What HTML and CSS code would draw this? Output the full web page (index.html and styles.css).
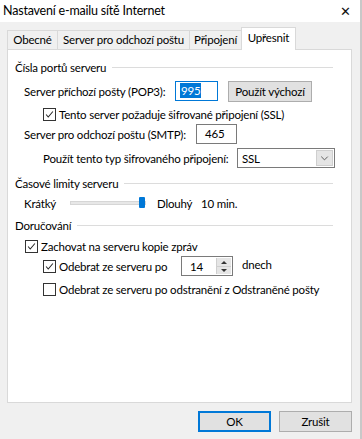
FILE: index.html
```html
<!DOCTYPE html>
<html lang="cs">
<head>
    <meta charset="UTF-8">
    <title>Nastavení e-mailu sítě Internet</title>
    <link rel="stylesheet" href="styles.css">
</head>
<body>
    <div class="window">
        <div class="titlebar">
            <span class="title">Nastavení e-mailu sítě Internet</span>
            <span class="close">&#x2715;</span>
        </div>

        <div class="tabs">
            <div class="tab t1">Obecné</div>
            <div class="tab t2">Server pro odchozí poštu</div>
            <div class="tab t3">Připojení</div>
            <div class="tab t4 active">Upřesnit</div>
        </div>

        <div class="panel">
            <div class="group-title first">Čísla portů serveru</div>

            <div class="row r-pop3">
                <span class="label w-pop3">Server příchozí pošty (POP3):</span>
                <div class="input focused w-43"><span class="sel">995</span></div>
                <button class="btn btn-default-port">Použít výchozí</button>
            </div>

            <div class="row r-check in-2 r-ssl">
                <span class="check on"><svg viewBox="0 0 13 13"><path d="M2.5 6.5 L5 9.5 L10.5 3"/></svg></span>
                <span>Tento server požaduje šifrované připojení (SSL)</span>
            </div>

            <div class="row r-smtp">
                <span class="label w-smtp">Server pro odchozí poštu (SMTP):</span>
                <div class="input w-41">465</div>
            </div>

            <div class="row r-enc in-2">
                <span class="label w-enc">Použít tento typ šifrovaného připojení:</span>
                <div class="select">
                    <span>SSL</span>
                    <span class="drop"><svg viewBox="0 0 16 15"><path d="M4.5 6 L8 9.5 L11.5 6"/></svg></span>
                </div>
            </div>

            <div class="group-title">Časové limity serveru</div>

            <div class="row r-slider">
                <span class="label w-short">Krátký</span>
                <div class="slider"><span class="thumb"></span></div>
                <span class="label w-long">Dlouhý</span>
                <span>10 min.</span>
            </div>

            <div class="group-title g-deliv">Doručování</div>

            <div class="row r-check r-keep">
                <span class="check on"><svg viewBox="0 0 13 13"><path d="M2.5 6.5 L5 9.5 L10.5 3"/></svg></span>
                <span>Zachovat na serveru kopie zpráv</span>
            </div>

            <div class="row r-remove in-2">
                <span class="check on"><svg viewBox="0 0 13 13"><path d="M2.5 6.5 L5 9.5 L10.5 3"/></svg></span>
                <span class="label w-remove">Odebrat ze serveru po</span>
                <div class="spin">
                    <span class="spin-val">14</span>
                    <span class="spin-btns">
                        <span class="arr up"></span>
                        <span class="arr down"></span>
                    </span>
                </div>
                <span class="days">dnech</span>
            </div>

            <div class="row r-check in-2 r-deleted">
                <span class="check"></span>
                <span>Odebrat ze serveru po odstranění z Odstraněné pošty</span>
            </div>
        </div>

        <div class="footer">
            <button class="btn btn-ok">OK</button>
            <button class="btn">Zrušit</button>
        </div>
    </div>
</body>
</html>
```

FILE: styles.css
```css
* { margin: 0; padding: 0; box-sizing: border-box; }
body {
    font-family: Lato, "Noto Sans", sans-serif;
    font-size: 11.5px;
    letter-spacing: -0.2px;
    color: #000;
    background: #f0f0f0;
}
.window {
    width: 362px;
    height: 439px;
    background: #f0f0f0;
    border-right: 2px solid #c8c8c8;
}

/* title bar */
.titlebar {
    height: 22px;
    background: #fff;
    display: flex;
    align-items: center;
    justify-content: space-between;
    padding: 0 9px 1px 3px;
}
.title { font-size: 12.5px; }
.close { font-size: 13px; color: #111; }

/* tabs */
.tabs {
    display: flex;
    align-items: flex-end;
    padding-left: 7px;
    margin-top: 5px;
    height: 22px;
}
.tab {
    height: 19px;
    text-align: center;
    line-height: 17px;
    border: 1px solid #d9d9d9;
    border-bottom: none;
    border-right: none;
    background: #f0f0f0;
    white-space: nowrap;
}
.t1 { width: 50px; }
.t2 { width: 132px; }
.t3 { width: 52px; }
.t4 { width: 55px; }
.tab.active {
    height: 23px;
    margin-bottom: -1px;
    background: #fff;
    border-right: 1px solid #d9d9d9;
    line-height: 19px;
    position: relative;
}

/* main panel */
.panel {
    margin-left: 7px;
    width: 345px;
    height: 354px;
    background: #fff;
    border: 1px solid #d9d9d9;
    padding: 0 18px 0 7px;
}
.group-title {
    display: flex;
    align-items: center;
    height: 20px;
    margin-top: 5px;
}
.group-title::after {
    content: "";
    flex: 1;
    border-top: 1px solid #dcdcdc;
    margin-left: 6px;
}
.group-title.first { margin-top: 7px; }
.group-title.g-deliv { margin-top: 2px; }

.row {
    display: flex;
    align-items: center;
    height: 20px;
    padding-left: 9px;
    white-space: nowrap;
}
.row > * { flex-shrink: 0; }
.row.in-2 { padding-left: 28px; }
.row.r-check { height: 14px; }
.r-pop3 { margin-top: 4px; }
.r-ssl { margin-top: 6px; }
.r-smtp { margin-top: 3px; }
.r-enc { margin-top: 4px; padding-left: 27px; }
.r-slider { margin-top: 0; }
.r-keep { margin-top: 4px; padding-left: 10px; }
.r-remove { margin-top: 3px; }
.r-deleted { margin-top: 6px; }

.w-pop3 { width: 151px; }
.w-smtp { width: 172px; }
.w-enc { width: 194px; }
.w-short { width: 46px; }
.w-long { width: 44px; margin-left: 17px; }
.w-remove { width: 122px; }

/* inputs */
.input {
    height: 20px;
    border: 1px solid #7a7a7a;
    background: #fff;
    padding-left: 6px;
    line-height: 18px;
}
.input.focused { border-color: #0078d7; padding-left: 4px; }
.w-43 { width: 43px; }
.w-41 { width: 41px; padding-left: 8px; }
.sel {
    background: #0078d7;
    color: #fff;
    padding: 1px 1px;
}

.btn {
    font-family: inherit;
    font-size: 11.5px;
    letter-spacing: -0.2px;
    height: 21px;
    background: #e1e1e1;
    border: 1px solid #adadad;
    color: #000;
}
.btn-default-port {
    width: 84px;
    margin-left: 10px;
}

/* checkbox */
.check {
    width: 13px;
    height: 13px;
    border: 1px solid #333;
    background: #fff;
    margin-right: 3px;
    display: inline-flex;
}
.check svg { width: 11px; height: 11px; }
.check path {
    fill: none;
    stroke: #222;
    stroke-width: 1.2;
}

/* select */
.select {
    width: 98px;
    height: 20px;
    border: 1px solid #7a7a7a;
    display: flex;
    align-items: center;
    justify-content: space-between;
    padding: 1px 1px 1px 4px;
}
.drop {
    width: 17px;
    height: 16px;
    background: #e5e5e5;
    border: 1px solid #cfcfcf;
    display: flex;
}
.drop svg { width: 15px; height: 14px; }
.drop path {
    fill: none;
    stroke: #555;
    stroke-width: 1;
}

/* slider */
.slider {
    width: 76px;
    height: 4px;
    background: #e7e7e7;
    border: 1px solid #d6d6d6;
    position: relative;
    margin-right: -6px;
}
.thumb {
    position: absolute;
    left: 68px;
    top: -5px;
    width: 6px;
    height: 11px;
    background: #0078d7;
    border-radius: 1px;
}

/* spinner */
.spin {
    width: 52px;
    height: 20px;
    border: 1px solid #7a7a7a;
    display: flex;
    justify-content: space-between;
}
.spin-val {
    padding-left: 8px;
    line-height: 20px;
}
.spin-btns {
    width: 15px;
    display: flex;
    flex-direction: column;
    border-left: 1px solid #cfcfcf;
    margin: 1px 1px 1px 0;
    background: #e5e5e5;
}
.arr {
    flex: 1;
    position: relative;
}
.arr.up { border-bottom: 1px solid #cfcfcf; }
.arr::after {
    content: "";
    position: absolute;
    left: 4px;
    top: 3px;
    border-left: 3px solid transparent;
    border-right: 3px solid transparent;
}
.arr.up::after { border-bottom: 3px solid #333; }
.arr.down::after { border-top: 3px solid #333; top: 2px; }
.days { margin-left: 9px; margin-top: -4px; }

/* footer */
.footer {
    display: flex;
    justify-content: flex-end;
    gap: 8px;
    padding: 8px 8px 0 0;
}
.footer .btn { width: 73px; }
.btn-ok { border: 2px solid #0078d7; }
```
